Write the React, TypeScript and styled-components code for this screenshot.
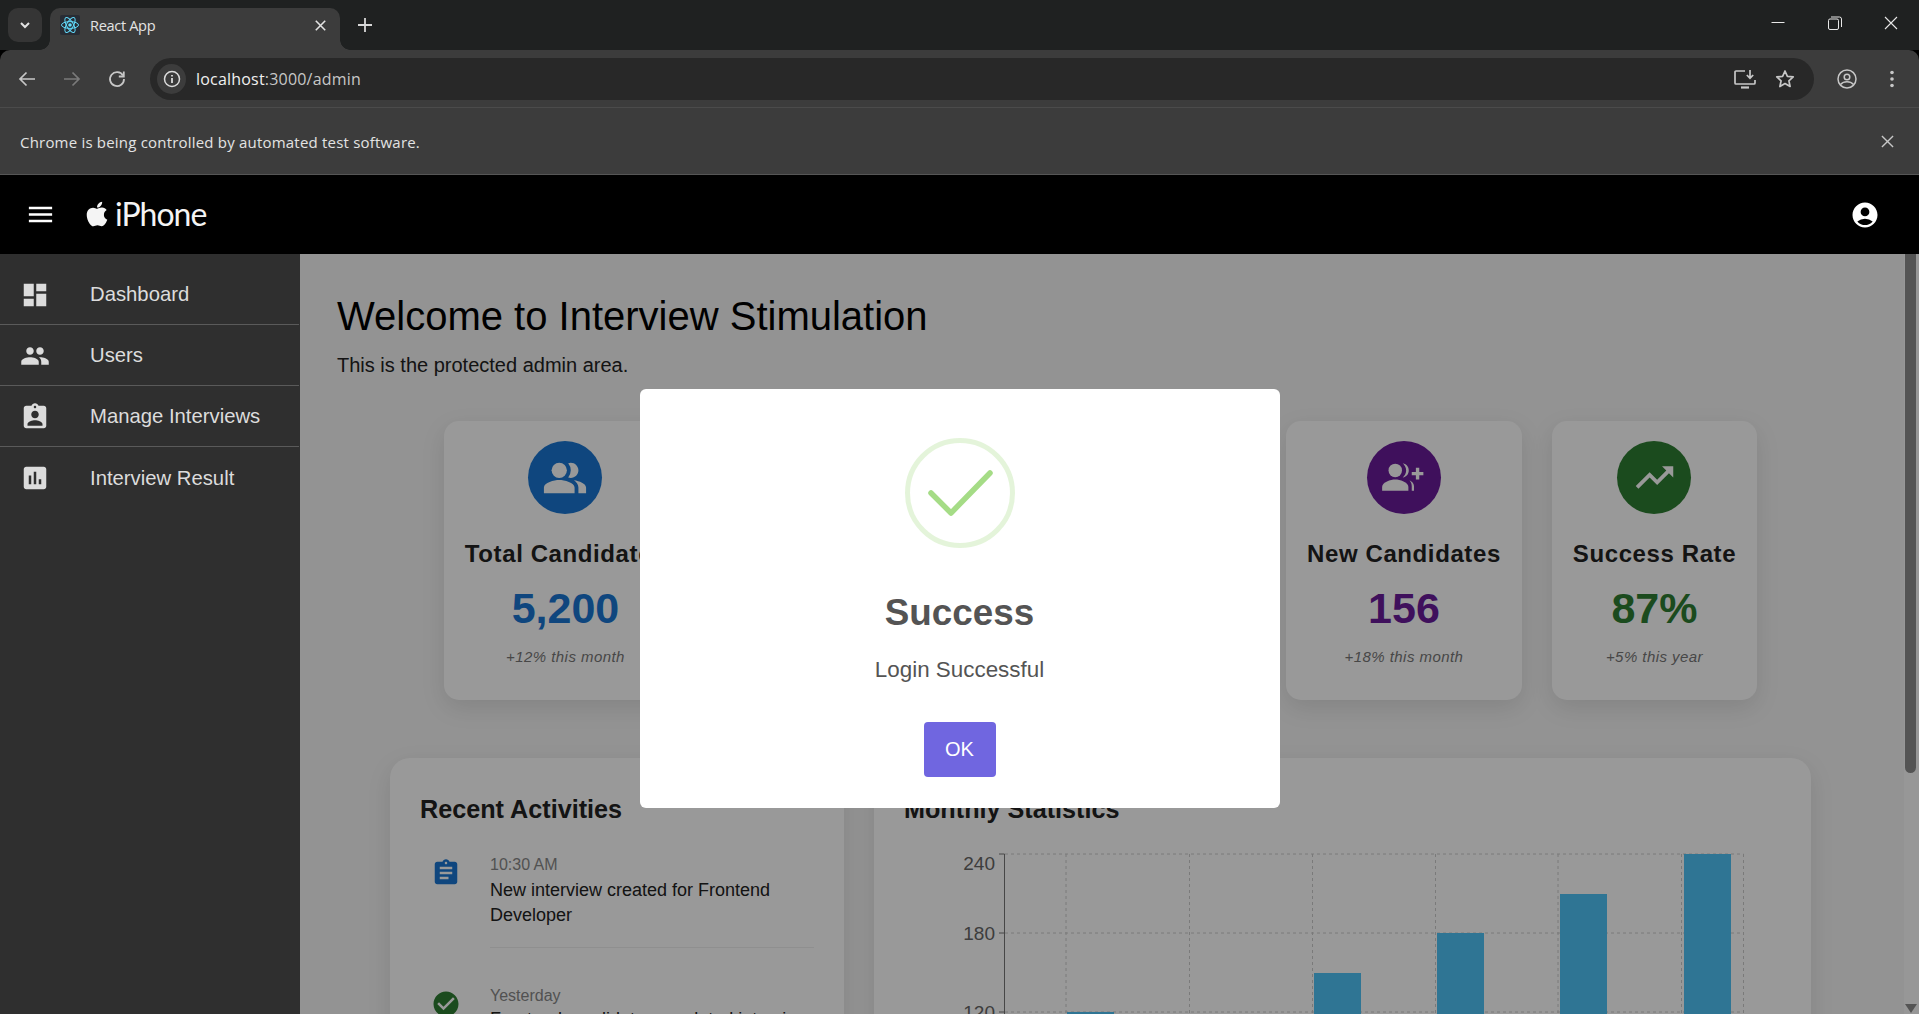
import React from "react";
import styled, { createGlobalStyle } from "styled-components";
import { FaApple } from "react-icons/fa";
import {
  MdDashboard,
  MdPeople,
  MdAssignmentInd,
  MdAssessment,
  MdMenu,
  MdAccountCircle,
  MdAssignment,
  MdCheckCircle,
  MdTrendingUp,
  MdPeopleAlt,
} from "react-icons/md";

const Global = createGlobalStyle`
  html, body { margin: 0; padding: 0; height: 100%; overflow: hidden; background: #000; }
  * { box-sizing: border-box; }
  #root { height: 100%; }
`;

const Page = styled.div`
  height: 1014px;
  display: flex;
  flex-direction: column;
  overflow: hidden;
  font-family: "Liberation Sans", Arial, sans-serif;
`;

/* ---------- browser chrome ---------- */
const TabStrip = styled.div`
  height: 50px;
  background: #1f2121;
  display: flex;
  align-items: flex-start;
  padding: 8px 0 0 8px;
  flex: none;
`;
const TabSearch = styled.div`
  width: 34px;
  height: 34px;
  border-radius: 10px;
  background: #353535;
  color: #e3e3e3;
  display: flex;
  align-items: center;
  justify-content: center;
`;
const Tab = styled.div`
  position: relative;
  margin-left: 8px;
  width: 290px;
  height: 42px;
  background: #3c3c3c;
  border-radius: 10px 10px 0 0;
  display: flex;
  align-items: center;
  padding: 0 14px 8px 10px;
  color: #e3e3e3;
  font: 14.6px "Open Sans", sans-serif;
  letter-spacing: -0.35px;
  &::before, &::after {
    content: "";
    position: absolute;
    bottom: 0;
    width: 10px;
    height: 10px;
  }
  &::before {
    left: -10px;
    background: radial-gradient(circle at 0 0, transparent 9.5px, #3c3c3c 10px);
  }
  &::after {
    right: -10px;
    background: radial-gradient(circle at 100% 0, transparent 9.5px, #3c3c3c 10px);
  }
`;
const TabTitle = styled.span`
  margin-left: 10px;
  flex: 1;
`;
const NewTab = styled.div`
  margin: 6px 0 0 14px;
  width: 22px;
  height: 22px;
  color: #d8d8d8;
  display: flex;
  align-items: center;
  justify-content: center;
`;
const WindowControls = styled.div`
  margin: -8px 0 0 auto;
  display: flex;
  color: #e8e8e8;
`;
const WindowButton = styled.div`
  width: 57px;
  height: 46px;
  display: flex;
  align-items: center;
  justify-content: center;
  &:last-child { width: 56px; }
`;
const Toolbar = styled.div`
  height: 58px;
  flex: none;
  background: #3c3c3c;
  border-radius: 10px 10px 0 0;
  border-bottom: 1px solid #4b4b4b;
  display: flex;
  align-items: center;
  padding: 1px 0 0 9px;
`;
const NavButton = styled.div<{ $dim?: boolean }>`
  width: 36px;
  height: 36px;
  margin-right: 9px;
  display: flex;
  align-items: center;
  justify-content: center;
  color: ${(p) => (p.$dim ? "#7a7a7a" : "#c7c7c7")};
`;
const Omnibox = styled.div`
  flex: 1;
  height: 42px;
  margin: 0 15px 0 6px;
  background: #282828;
  border-radius: 21px;
  display: flex;
  align-items: center;
  padding: 0 9px 0 7px;
  color: #c7c7c7;
`;
const InfoChip = styled.div`
  width: 29px;
  height: 30px;
  border-radius: 50%;
  background: #3c3c3c;
  display: flex;
  align-items: center;
  justify-content: center;
`;
const Url = styled.div`
  margin-left: 10px;
  flex: 1;
  font: 16px "Open Sans", sans-serif;
  letter-spacing: 0.2px;
  color: #c7c7c7;
`;
const UrlHost = styled.span`
  color: #f0f0f0;
`;
const OmniAction = styled.div`
  width: 40px;
  height: 36px;
  display: flex;
  align-items: center;
  justify-content: center;
`;
const InfoBar = styled.div`
  height: 67px;
  flex: none;
  background: #3c3c3c;
  border-bottom: 1px solid #565656;
  display: flex;
  align-items: center;
  justify-content: space-between;
  padding: 1px 25px 0 20px;
  font: 15px "Open Sans", sans-serif;
  letter-spacing: 0.2px;
  color: #e3e3e3;
`;
const InfoClose = styled.div`
  color: #c7c7c7;
  display: flex;
`;

/* ---------- app ---------- */
const AppArea = styled.div`
  position: relative;
  flex: 1;
  min-height: 0;
  display: flex;
  flex-direction: column;
`;
const AppHeader = styled.header`
  position: relative;
  z-index: 2;
  height: 79px;
  flex: none;
  background: #000;
  color: #fff;
  display: flex;
  align-items: center;
  padding: 0 39px 0 25px;
`;
const Brand = styled.div`
  margin-left: 27px;
  padding-bottom: 2px;
  display: flex;
  align-items: center;
  font: 32px Lato, sans-serif;
  letter-spacing: -1px;
  color: #f4f4f4;
`;
const BrandName = styled.span`
  margin-left: 4px;
`;
const HeaderRight = styled.div`
  margin-left: auto;
  display: flex;
`;
const Body = styled.div`
  flex: 1;
  min-height: 0;
  display: flex;
`;
const Sidebar = styled.nav`
  position: relative;
  z-index: 2;
  width: 300px;
  flex: none;
  background: #2f2f2f;
  padding-top: 10px;
`;
const NavItem = styled.div`
  height: 61px;
  margin-right: 1px;
  padding: 1px 0 0 20px;
  display: flex;
  align-items: center;
  color: #dcdcdc;
  font-size: 20.3px;
  border-bottom: 1px solid #5a5a5a;
  &:last-child { border-bottom: none; }
`;
const NavLabel = styled.span`
  margin-left: 40px;
`;
const Main = styled.main`
  flex: 1;
  min-width: 0;
  background: #f5f5f5;
  overflow: hidden;
  padding: 39px 39px 0 37px;
`;
const Title = styled.h1`
  margin: 0;
  font-size: 40px;
  font-weight: 400;
  line-height: 46px;
  color: #000;
`;
const Subtitle = styled.p`
  margin: 15px 0 0;
  font-size: 20px;
  line-height: 23px;
  color: #222;
`;
const Cards = styled.div`
  margin: 44px 0 0 -1px;
  display: flex;
  justify-content: center;
  gap: 30px;
`;
const Card = styled.div<{ $width?: number }>`
  background: #fff;
  border-radius: 15px;
  padding: 20px 21px 35px;
  ${(p) => (p.$width ? `width: ${p.$width}px;` : "")}
  box-shadow: 0 8px 24px rgba(0, 0, 0, 0.1);
  display: flex;
  flex-direction: column;
  align-items: center;
  white-space: nowrap;
`;
const CardBadge = styled.div<{ $color: string }>`
  width: 74px;
  height: 73px;
  border-radius: 50%;
  background: ${(p) => p.$color};
  color: #fff;
  display: flex;
  align-items: center;
  justify-content: center;
`;
const CardTitle = styled.div`
  margin-top: 26px;
  font-size: 24px;
  line-height: 28px;
  font-weight: 700;
  letter-spacing: 0.6px;
  color: #222;
`;
const CardValue = styled.div<{ $color: string }>`
  margin-top: 16px;
  font-size: 43px;
  line-height: 48px;
  font-weight: 700;
  color: ${(p) => p.$color};
`;
const CardNote = styled.div`
  margin-top: 17px;
  font-size: 15px;
  line-height: 16px;
  font-style: italic;
  letter-spacing: 0.45px;
  color: #777;
`;
const Panels = styled.div`
  margin: 58px 54px 0 53px;
  display: grid;
  grid-template-columns: 454px 1fr;
  gap: 30px;
`;
const Panel = styled.section`
  background: #fff;
  border-radius: 20px;
  padding: 37px 30px 30px;
  height: 500px;
  box-shadow: 0 8px 24px rgba(0, 0, 0, 0.1);
`;
const PanelTitle = styled.h2`
  margin: 0;
  font-size: 25.2px;
  line-height: 28px;
  font-weight: 700;
  color: #222;
`;
const ActivityText = styled.div`
  margin-top: 5px;
  font-size: 18px;
  line-height: 25px;
  color: #222;
`;
const Activity = styled.div`
  margin-top: 34px;
  display: flex;
  align-items: flex-start;
  & + & { margin-top: 40px; }
  & + & ${ActivityText} { margin-top: 3px; }
`;
const ActivityIcon = styled.div<{ $color: string }>`
  margin: 1px 29px 0 11px;
  width: 30px;
  height: 30px;
  flex: none;
  color: ${(p) => p.$color};
  display: flex;
`;
const ActivityBody = styled.div<{ $ruled?: boolean }>`
  flex: 1;
  padding-bottom: 19px;
  ${(p) => (p.$ruled ? "border-bottom: 1px solid #eee;" : "")}
`;
const ActivityTime = styled.div`
  font-size: 16px;
  line-height: 16px;
  color: #888;
`;
const ChartSvg = styled.svg`
  display: block;
  margin-top: 20px;
  width: 875px;
  height: 320px;
`;
const ScrollTrack = styled.div`
  width: 15px;
  flex: none;
  background: #fcfcfc;
  display: flex;
  flex-direction: column;
  padding-left: 1px;
`;
const ScrollThumb = styled.div`
  width: 11px;
  height: 519px;
  background: #8c8c8c;
  border-radius: 0 0 6px 6px;
`;
const ScrollArrow = styled.div`
  margin: auto 0 1px 0;
  width: 0;
  height: 0;
  border-left: 6px solid transparent;
  border-right: 6px solid transparent;
  border-top: 9px solid #8c8c8c;
`;

/* ---------- modal ---------- */
const Overlay = styled.div`
  position: absolute;
  inset: 0;
  z-index: 1;
  background: rgba(0, 0, 0, 0.4);
  display: flex;
  align-items: center;
  justify-content: center;
  padding-top: 8px;
`;
const Modal = styled.div`
  width: 640px;
  height: 419px;
  background: #fff;
  border-radius: 6px;
  display: flex;
  flex-direction: column;
  align-items: center;
  padding-top: 49px;
`;
const SuccessIcon = styled.svg`
  display: block;
  width: 110px;
  height: 110px;
`;
const ModalTitle = styled.h2`
  margin: 44px 0 0;
  font-size: 36.8px;
  line-height: 42px;
  font-weight: 700;
  color: #545454;
`;
const ModalText = styled.div`
  margin-top: 23px;
  font-size: 22.4px;
  line-height: 26px;
  color: #545454;
`;
const OkButton = styled.button`
  margin-top: 39px;
  width: 72px;
  height: 55px;
  border: none;
  border-radius: 4px;
  background: #7066e0;
  color: #fff;
  font: 20px "Liberation Sans", Arial, sans-serif;
`;

const ReactFavicon = () => (
  <svg width="20" height="20" viewBox="0 0 20 20">
    <rect width="20" height="20" rx="2" fill="#282c34" />
    <g fill="none" stroke="#61dafb" strokeWidth="1">
      <ellipse cx="10" cy="10" rx="8.5" ry="3.4" />
      <ellipse cx="10" cy="10" rx="8.5" ry="3.4" transform="rotate(60 10 10)" />
      <ellipse cx="10" cy="10" rx="8.5" ry="3.4" transform="rotate(120 10 10)" />
    </g>
    <circle cx="10" cy="10" r="1.8" fill="#61dafb" />
  </svg>
);

const Chevron = () => (
  <svg width="14" height="14" viewBox="0 0 14 14" fill="none" stroke="currentColor" strokeWidth="2">
    <path d="M3 5l4 4 4-4" />
  </svg>
);

const Cross = ({ size = 14, w = 1.6 }: { size?: number; w?: number }) => (
  <svg width={size} height={size} viewBox="0 0 14 14" fill="none" stroke="currentColor" strokeWidth={w}>
    <path d="M1 1l12 12M13 1L1 13" />
  </svg>
);

const NewCandidateIcon = () => (
  <svg width="45" height="45" viewBox="0 0 24 24" fill="currentColor">
    <circle cx="7.6" cy="8.2" r="3.6" />
    <path d="M0.6 19v-2c0-2.6 4.6-4 7-4s7 1.4 7 4v2z" />
    <path d="M11.6 4.4c2.2.5 3.2 2.1 3.2 3.8s-1 3.3-3.2 3.8c1-1 1.8-2.3 1.8-3.8s-.8-2.8-1.8-3.8z" />
    <path d="M15.2 13.4c1.5.7 2.4 1.900 2.4 3.300V19h-1.200v-2.400c0-1.200-.4-2.200-1.200-3.200z" />
    <path d="M18.600 6.800h1.800v2.200h2.200v1.800h-2.200v2.200h-1.800v-2.200h-2.200V9h2.200z" />
  </svg>
);

const Chart = () => {
  const hLines = [853, 932, 1011];
  const vLines = [1066, 1189.5, 1312.5, 1435.5, 1558, 1681.5, 1743.5];
  const bars = [
    [1067, 1011],
    [1314, 972],
    [1437, 932],
    [1560, 893],
    [1684, 853],
  ];
  const labels = [
    ["240", 869],
    ["180", 939],
    ["120", 1018],
  ] as const;
  return (
    <ChartSvg viewBox="904 842 875 320">
      {hLines.map((y) => (
        <line key={y} x1="1005" x2="1743.500" y1={y} y2={y} stroke="#ccc" strokeDasharray="3 3" />
      ))}
      {vLines.map((x) => (
        <line key={x} x1={x} x2={x} y1="853" y2="1160" stroke="#ccc" strokeDasharray="3 3" />
      ))}
      {bars.map(([x, y]) => (
        <rect key={x} x={x} y={y} width="47" height={1160 - y} fill="#4fc3f7" />
      ))}
      <line x1="1004.500" x2="1004.500" y1="853" y2="1160" stroke="#777" />
      {hLines.map((y) => (
        <line key={y} x1="999" x2="1004.500" y1={y} y2={y} stroke="#777" />
      ))}
      {labels.map(([t, y]) => (
        <text key={t} x="995" y={y} textAnchor="end" fontSize="19" fill="#666" fontFamily="Liberation Sans, Arial, sans-serif">
          {t}
        </text>
      ))}
    </ChartSvg>
  );
};

const stats = [
  { title: "Total Candidates", value: "5,200", note: "+12% this month", color: "#1976d2", icon: <MdPeopleAlt size={46} /> },
  { title: "Active Interviews", value: "320", note: "+8% this month", color: "#ed6c02", icon: <MdAssignment size={45} />, width: 254.5 },
  { title: "Completed", value: "1,240", note: "+15% this month", color: "#00897b", icon: <MdCheckCircle size={45} />, width: 254.5 },
  { title: "New Candidates", value: "156", note: "+18% this month", color: "#6a1b9a", icon: <NewCandidateIcon /> },
  { title: "Success Rate", value: "87%", note: "+5% this year", color: "#2e7d32", icon: <MdTrendingUp size={45} /> },
];

const navItems = [
  { label: "Dashboard", icon: <MdDashboard size={30} /> },
  { label: "Users", icon: <MdPeople size={30} /> },
  { label: "Manage Interviews", icon: <MdAssignmentInd size={30} /> },
  { label: "Interview Result", icon: <MdAssessment size={30} /> },
];

export default function App() {
  return (
    <Page>
      <Global />
      <TabStrip>
        <TabSearch>
          <Chevron />
        </TabSearch>
        <Tab>
          <ReactFavicon />
          <TabTitle>React App</TabTitle>
          <Cross size={11} w={2} />
        </Tab>
        <NewTab>
          <svg width="14" height="14" viewBox="0 0 14 14" stroke="currentColor" strokeWidth="1.8">
            <path d="M7 0v14M0 7h14" />
          </svg>
        </NewTab>
        <WindowControls>
          <WindowButton>
            <svg width="14" height="14" viewBox="0 0 14 14" stroke="currentColor">
              <path d="M0.500 6.500h13" />
            </svg>
          </WindowButton>
          <WindowButton>
            <svg width="14" height="14" viewBox="0 0 14 14" fill="none" stroke="currentColor">
              <rect x="0.500" y="3" width="10" height="10.500" rx="1.500" />
              <path d="M3 1h8.500a2 2 0 0 1 2 2v8" />
            </svg>
          </WindowButton>
          <WindowButton>
            <Cross size={14} w={1.1} />
          </WindowButton>
        </WindowControls>
      </TabStrip>
      <Toolbar>
        <NavButton>
          <svg width="18" height="18" viewBox="0 0 18 18" fill="none" stroke="currentColor" strokeWidth="1.700">
            <path d="M17 9H2M8.500 2.500L2 9l6.500 6.500" />
          </svg>
        </NavButton>
        <NavButton $dim>
          <svg width="18" height="18" viewBox="0 0 18 18" fill="none" stroke="currentColor" strokeWidth="1.700">
            <path d="M1 9h15M9.500 2.500L16 9l-6.500 6.500" />
          </svg>
        </NavButton>
        <NavButton>
          <svg width="18" height="18" viewBox="0 0 18 18" fill="none" stroke="currentColor" strokeWidth="1.800">
            <path d="M15 5.500A7 7 0 1 0 16 9" />
            <path d="M15.800 1.500v5h-5" />
          </svg>
        </NavButton>
        <Omnibox>
          <InfoChip>
            <svg width="18" height="18" viewBox="0 0 18 18" fill="none" stroke="#dcdcdc" strokeWidth="1.500">
              <circle cx="9" cy="9" r="7.500" />
              <path d="M9 8v5M9 5v1.500" strokeWidth="1.800" />
            </svg>
          </InfoChip>
          <Url>
            <UrlHost>localhost</UrlHost>:3000/admin
          </Url>
          <OmniAction>
            <svg width="22" height="20" viewBox="0 0 22 20" fill="none" stroke="currentColor" strokeWidth="1.700">
              <path d="M11 2H2a1 1 0 0 0-1 1v11a1 1 0 0 0 1 1h18a1 1 0 0 0 1-1v-3" />
              <path d="M16 1v8M12.800 6l3.200 3.200L19.200 6" />
              <path d="M7 18.500h8" strokeWidth="2.200" />
            </svg>
          </OmniAction>
          <OmniAction>
            <svg width="20" height="20" viewBox="0 0 20 20" fill="none" stroke="currentColor" strokeWidth="1.700" strokeLinejoin="round">
              <path d="M10 2l2.400 5.300 5.800.6-4.300 3.900 1.200 5.700L10 14.600l-5.100 2.900 1.200-5.700L1.800 7.900l5.800-.6z" />
            </svg>
          </OmniAction>
        </Omnibox>
        <NavButton>
          <svg width="20" height="20" viewBox="0 0 20 20" fill="none" stroke="currentColor" strokeWidth="1.500">
            <circle cx="10" cy="10" r="9" />
            <circle cx="10" cy="8" r="2.800" />
            <path d="M3.500 15.500c1.800-2 4-2.700 6.500-2.700s4.700.7 6.500 2.700" />
          </svg>
        </NavButton>
        <NavButton>
          <svg width="6" height="18" viewBox="0 0 6 18" fill="currentColor">
            <circle cx="3" cy="2.500" r="1.800" />
            <circle cx="3" cy="9" r="1.800" />
            <circle cx="3" cy="15.500" r="1.800" />
          </svg>
        </NavButton>
      </Toolbar>
      <InfoBar>
        Chrome is being controlled by automated test software.
        <InfoClose>
          <Cross size={13} w={1.500} />
        </InfoClose>
      </InfoBar>
      <AppArea>
        <AppHeader>
          <MdMenu size={31} />
          <Brand>
            <FaApple size={28} />
            <BrandName>iPhone</BrandName>
          </Brand>
          <HeaderRight>
            <MdAccountCircle size={30} />
          </HeaderRight>
        </AppHeader>
        <Body>
          <Sidebar>
            {navItems.map((n) => (
              <NavItem key={n.label}>
                {n.icon}
                <NavLabel>{n.label}</NavLabel>
              </NavItem>
            ))}
          </Sidebar>
          <Main>
            <Title>Welcome to Interview Stimulation</Title>
            <Subtitle>This is the protected admin area.</Subtitle>
            <Cards>
              {stats.map((s) => (
                <Card key={s.title} $width={s.width}>
                  <CardBadge $color={s.color}>{s.icon}</CardBadge>
                  <CardTitle>{s.title}</CardTitle>
                  <CardValue $color={s.color}>{s.value}</CardValue>
                  <CardNote>{s.note}</CardNote>
                </Card>
              ))}
            </Cards>
            <Panels>
              <Panel>
                <PanelTitle>Recent Activities</PanelTitle>
                <Activity>
                  <ActivityIcon $color="#1976d2">
                    <MdAssignment size={30} />
                  </ActivityIcon>
                  <ActivityBody $ruled>
                    <ActivityTime>10:30 AM</ActivityTime>
                    <ActivityText>New interview created for Frontend Developer</ActivityText>
                  </ActivityBody>
                </Activity>
                <Activity>
                  <ActivityIcon $color="#2e7d32">
                    <MdCheckCircle size={30} />
                  </ActivityIcon>
                  <ActivityBody>
                    <ActivityTime>Yesterday</ActivityTime>
                    <ActivityText>Frontend candidate completed interview</ActivityText>
                  </ActivityBody>
                </Activity>
              </Panel>
              <Panel>
                <PanelTitle>Monthly Statistics</PanelTitle>
                <Chart />
              </Panel>
            </Panels>
          </Main>
          <ScrollTrack>
            <ScrollThumb />
            <ScrollArrow />
          </ScrollTrack>
        </Body>
        <Overlay>
          <Modal>
            <SuccessIcon viewBox="0 0 110 110" fill="none">
              <circle cx="55" cy="55" r="52.500" stroke="#a5dc86" strokeOpacity="0.3" strokeWidth="5" />
              <path d="M26 55l20 20 39-40" stroke="#a5dc86" strokeWidth="5.500" strokeLinecap="round" strokeLinejoin="round" />
            </SuccessIcon>
            <ModalTitle>Success</ModalTitle>
            <ModalText>Login Successful</ModalText>
            <OkButton>OK</OkButton>
          </Modal>
        </Overlay>
      </AppArea>
    </Page>
  );
}
